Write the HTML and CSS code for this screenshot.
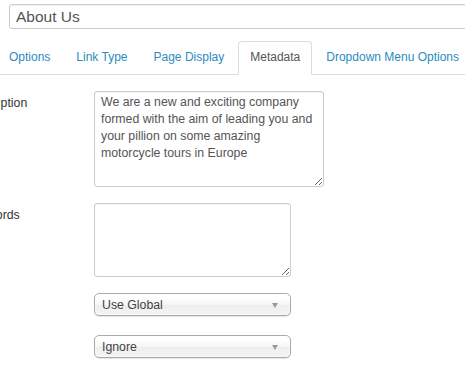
FILE: index.html
```html
<!DOCTYPE html>
<html lang="en">
<head>
  <meta charset="UTF-8" />
  <title>Menu Item: About Us</title>
  <link rel="stylesheet" href="styles.css">
</head>
<body>
  <div class="page">
    <input class="title-input" type="text" value="About Us" />

    <ul class="tabs">
      <li><a href="#">Options</a></li>
      <li><a href="#">Link Type</a></li>
      <li><a href="#">Page Display</a></li>
      <li class="active"><a href="#">Metadata</a></li>
      <li><a href="#">Dropdown Menu Options</a></li>
    </ul>

    <form class="meta-form">
      <div class="row">
        <label class="control-label">Meta Description</label>
        <textarea class="desc">We are a new and exciting company
formed with the aim of leading you and
your pillion on some amazing
motorcycle tours in Europe</textarea>
      </div>

      <div class="row">
        <label class="control-label">Meta Keywords</label>
        <textarea class="keys"></textarea>
      </div>

      <div class="row row-select">
        <label class="control-label">Robots</label>
        <div class="chosen">
          <span>Use Global</span>
          <b class="arrow"></b>
        </div>
      </div>

      <div class="row row-select">
        <label class="control-label">Secure</label>
        <div class="chosen">
          <span>Ignore</span>
          <b class="arrow"></b>
        </div>
      </div>
    </form>
  </div>
</body>
</html>
```

FILE: styles.css
```css
* {
  margin: 0;
  padding: 0;
  box-sizing: border-box;
}
html, body {
  overflow: hidden;
}
body {
  font-family: 'Liberation Sans', Arial, sans-serif;
  font-size: 12.3px;
  color: #333;
  background: #fff;
}
.page {
  width: 465px;
  height: 380px;
  overflow: hidden;
  padding-top: 4px;
}
.title-input {
  display: block;
  margin-left: 9px;
  width: 520px;
  height: 25px;
  padding: 0 6px;
  border: 1px solid #ccc;
  border-radius: 3px;
  font-family: inherit;
  font-size: 15.5px;
  color: #555;
  box-shadow: inset 0 1px 1px rgba(0, 0, 0, 0.06);
}

/* tabs */
.tabs {
  list-style: none;
  display: flex;
  margin: 12px 0 0 -3px;
  width: 540px;
  border-bottom: 1px solid #ddd;
  font-size: 12px;
}
.tabs li {
  margin-bottom: -1px;
  margin-right: 2px;
}
.tabs a {
  display: block;
  padding: 6px 11px 8px;
  line-height: 18px;
  border: 1px solid transparent;
  border-radius: 4px 4px 0 0;
  color: #2b8cbe;
  text-decoration: none;
  white-space: nowrap;
}
.tabs .active a {
  color: #555;
  background: #fff;
  border-color: #ddd #ddd transparent;
}

/* form rows */
.meta-form {
  margin: 16px 0 0 -65px;
}
.row {
  display: grid;
  grid-template-columns: 159px auto;
  align-items: start;
  margin-bottom: 16px;
}
.row-select {
  margin-bottom: 19px;
}
.control-label {
  padding-top: 5px;
  color: #333;
  white-space: nowrap;
}
textarea {
  display: block;
  padding: 2px 6px;
  border: 1px solid #ccc;
  border-radius: 3px;
  font-family: inherit;
  font-size: 12.3px;
  line-height: 17px;
  color: #555;
  box-shadow: inset 0 1px 1px rgba(0, 0, 0, 0.05);
  overflow: hidden;
}
.desc {
  width: 230px;
  height: 96px;
}
.keys {
  width: 197px;
  height: 74px;
}

/* chosen style selects */
.chosen {
  position: relative;
  width: 197px;
  height: 23px;
  padding-left: 7px;
  border: 1px solid #aaa;
  border-radius: 5px;
  background: linear-gradient(#fff 20%, #f6f6f6 50%, #eee 52%, #f4f4f4 100%);
  box-shadow: inset 0 0 3px #fff, 0 1px 1px rgba(0, 0, 0, 0.1);
  line-height: 22px;
  color: #444;
}
.chosen .arrow {
  position: absolute;
  right: 12px;
  top: 9px;
  width: 0;
  height: 0;
  border-left: 3px solid transparent;
  border-right: 3px solid transparent;
  border-top: 5px solid #999;
}
```
